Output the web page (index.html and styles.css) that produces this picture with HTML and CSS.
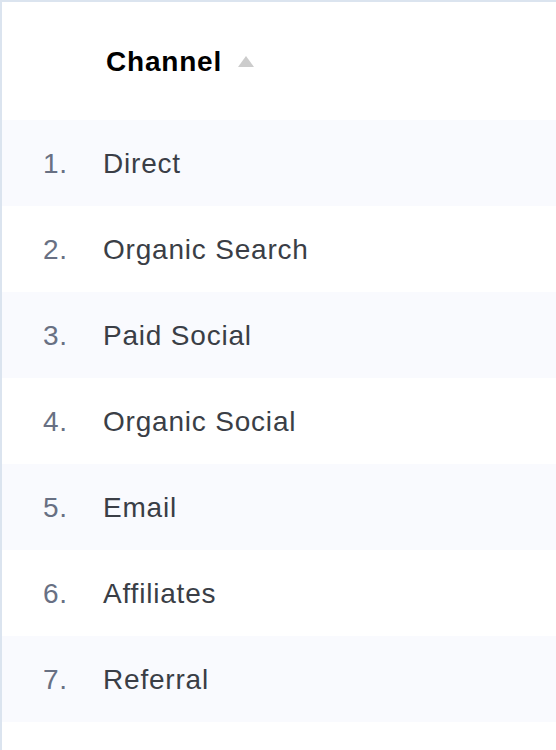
FILE: index.html
```html
<!DOCTYPE html>
<html>
<head>
<meta charset="utf-8">
<link rel="stylesheet" href="styles.css">
</head>
<body>
<div class="panel">
  <div class="head">
    <span class="head-label">Channel</span>
    <span class="sort-up"></span>
  </div>
  <div class="row alt"><span class="num">1.</span><span class="name">Direct</span></div>
  <div class="row"><span class="num">2.</span><span class="name">Organic Search</span></div>
  <div class="row alt"><span class="num">3.</span><span class="name">Paid Social</span></div>
  <div class="row"><span class="num">4.</span><span class="name">Organic Social</span></div>
  <div class="row alt"><span class="num">5.</span><span class="name">Email</span></div>
  <div class="row"><span class="num">6.</span><span class="name">Affiliates</span></div>
  <div class="row alt"><span class="num">7.</span><span class="name">Referral</span></div>
</div>
</body>
</html>
```
FILE: styles.css
```css
html, body {
  margin: 0;
  padding: 0;
  background: #ffffff;
}
body {
  font-family: "Liberation Sans", Arial, sans-serif;
  width: 556px;
  height: 750px;
  overflow: hidden;
}
.panel {
  border-top: 2px solid #dbe4ef;
  border-left: 2px solid #dbe4ef;
  box-sizing: border-box;
  height: 750px;
}
.head {
  height: 118px;
  display: flex;
  align-items: center;
  padding-left: 104px;
}
.head-label {
  font-size: 28px;
  font-weight: bold;
  letter-spacing: 0.8px;
  color: #000;
  margin-top: 2px;
}
.sort-up {
  width: 0;
  height: 0;
  margin-left: 16px;
  border-left: 8px solid transparent;
  border-right: 8px solid transparent;
  border-bottom: 11px solid #cccccc;
}
.row {
  height: 86px;
  box-sizing: border-box;
  padding-top: 2px;
  display: flex;
  align-items: center;
  font-size: 28px;
  letter-spacing: 0.8px;
}
.row.alt {
  background: #f9fafe;
}
.num {
  width: 60px;
  padding-left: 41px;
  color: #687083;
}
.name {
  color: #3a3e46;
}
```
